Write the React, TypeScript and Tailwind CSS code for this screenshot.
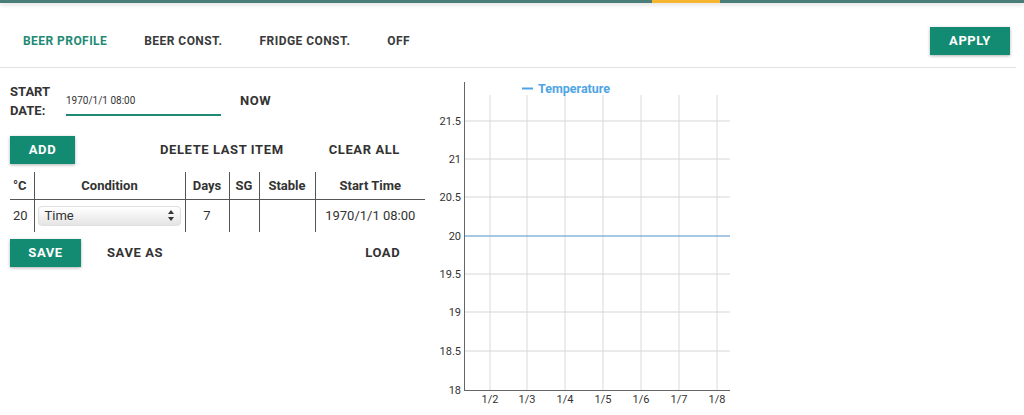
import React from 'react';

const teal = 'bg-[#138a72]';

const tabs = ['BEER PROFILE', 'BEER CONST.', 'FRIDGE CONST.', 'OFF'];

const yTicks = [
  { label: '21.5', y: 49 },
  { label: '21', y: 87 },
  { label: '20.5', y: 125 },
  { label: '20', y: 164 },
  { label: '19.5', y: 202 },
  { label: '19', y: 240 },
  { label: '18.5', y: 279 },
  { label: '18', y: 318 },
];

const xTicks = [
  { label: '1/2', x: 70 },
  { label: '1/3', x: 107 },
  { label: '1/4', x: 145 },
  { label: '1/5', x: 183 },
  { label: '1/6', x: 221 },
  { label: '1/7', x: 259 },
  { label: '1/8', x: 297 },
];

const TempChart: React.FC = () => (
  <svg width="320" height="340" viewBox="0 0 320 340" className="shrink-0" style={{ fontFamily: 'Roboto, sans-serif' }}>
    {xTicks.map((t) => (
      <line key={t.label} x1={t.x} y1={23} x2={t.x} y2={318} stroke="#dadada" strokeWidth="1" />
    ))}
    {yTicks.slice(0, 7).map((t) => (
      <line key={t.label} x1={44} y1={t.y} x2={310} y2={t.y} stroke={t.label === '20' ? '#8ab6dc' : '#d6d6d6'} strokeWidth={t.label === '20' ? 1.5 : 1} />
    ))}
    <line x1={44.5} y1={10} x2={44.5} y2={318} stroke="#666" strokeWidth="1" />
    <line x1={44} y1={318.5} x2={310} y2={318.5} stroke="#666" strokeWidth="1" />
    {yTicks.map((t) => (
      <text key={t.label} x={41} y={t.y + 4} textAnchor="end" fontSize="11" fill="#333">{t.label}</text>
    ))}
    {xTicks.map((t) => (
      <text key={t.label} x={t.x} y={331} textAnchor="middle" fontSize="11" fill="#333">{t.label}</text>
    ))}
    <line x1={102} y1={16.5} x2={113} y2={16.5} stroke="#4ea4e4" strokeWidth="2" />
    <text x={118} y={21} fontSize="12.5" fontWeight="700" fill="#4ea4e4">Temperature</text>
  </svg>
);

const SelectArrows: React.FC = () => (
  <svg width="6" height="11" viewBox="0 0 6 11">
    <path d="M3 0 L6 4 L0 4 Z" fill="#333" />
    <path d="M0 7 L6 7 L3 11 Z" fill="#333" />
  </svg>
);

const App: React.FC = () => {
  return (
    <div className="w-[1024px] h-[415px] bg-white overflow-hidden text-[#333]" style={{ fontFamily: 'Roboto, "Liberation Sans", sans-serif' }}>
      <div className="h-[3px] bg-[#4b7d78] shadow-[0_2px_4px_rgba(0,0,0,0.15)] flex">
        <div className="ml-[652px] w-[68px] h-[3px] bg-[#f5b52e]" />
      </div>

      <div className="flex items-center justify-between h-[65px] pt-[12px] border-b border-[#e2e2e2] mr-[8px]">
        <div className="flex gap-[37px] pl-[23px] text-[12px] font-bold tracking-[0.45px]">
          {tabs.map((t, i) => (
            <span key={t} className={i === 0 ? 'text-[#1e8a74]' : 'text-[#3a3a3a]'}>{t}</span>
          ))}
        </div>
        <button className={`${teal} text-white text-[13px] font-bold tracking-[0.6px] w-[80px] h-[28px] mr-[6px] shadow-[0_1px_3px_rgba(0,0,0,0.3)]`}>
          APPLY
        </button>
      </div>

      <div className="flex">
        <div className="w-[420px] pl-[10px] pt-[14px] shrink-0">
          <div className="flex items-center">
            <div className="text-[13px] font-bold leading-[19px] w-[56px]">START<br />DATE:</div>
            <div className="w-[155px] border-b-2 border-[#1e8a74] pt-[6px] pb-[6px] text-[10px] text-[#333]">1970/1/1 08:00</div>
            <span className="ml-[19px] text-[13px] font-bold tracking-[0.5px]">NOW</span>
          </div>

          <div className="flex items-center mt-[16px] text-[13px] font-bold tracking-[0.6px]">
            <button className={`${teal} text-white w-[65px] h-[28px] shadow-[0_1px_3px_rgba(0,0,0,0.3)] tracking-[0.6px]`}>ADD</button>
            <span className="ml-[85px]">DELETE LAST ITEM</span>
            <span className="ml-[45px]">CLEAR ALL</span>
          </div>

          <table className="mt-[8px] w-[415px] text-[13px] border-collapse">
            <thead>
              <tr className="h-[27px] border-b border-[#555]">
                <th className="w-[24px] text-left font-bold border-r border-[#555] pl-[3px]">°C</th>
                <th className="w-[151px] font-bold border-r border-[#555]">Condition</th>
                <th className="w-[44px] font-bold border-r border-[#555]">Days</th>
                <th className="w-[30px] font-bold border-r border-[#555]">SG</th>
                <th className="w-[56px] font-bold border-r border-[#555]">Stable</th>
                <th className="font-bold">Start Time</th>
              </tr>
            </thead>
            <tbody>
              <tr className="h-[33px]">
                <td className="border-r border-[#555] pl-[3px]">20</td>
                <td className="border-r border-[#555] px-[3px]">
                  <div className="h-[20px] w-[143px] rounded-[4px] bg-gradient-to-b from-white to-[#e4e4e4] border border-[#e0e0e0] flex items-center justify-between pl-[6px] pr-[6px]">
                    <span>Time</span>
                    <SelectArrows />
                  </div>
                </td>
                <td className="text-center border-r border-[#555]">7</td>
                <td className="border-r border-[#555]"></td>
                <td className="border-r border-[#555]"></td>
                <td className="text-center">1970/1/1 08:00</td>
              </tr>
            </tbody>
          </table>

          <div className="flex items-center mt-[7px] text-[13px] font-bold tracking-[0.6px]">
            <button className={`${teal} text-white w-[71px] h-[28px] shadow-[0_1px_3px_rgba(0,0,0,0.3)] tracking-[0.6px]`}>SAVE</button>
            <span className="ml-[26px]">SAVE AS</span>
            <span className="ml-[202px]">LOAD</span>
          </div>
        </div>

        <div className="pt-[4px]">
          <TempChart />
        </div>
      </div>
    </div>
  );
};

export default App;
